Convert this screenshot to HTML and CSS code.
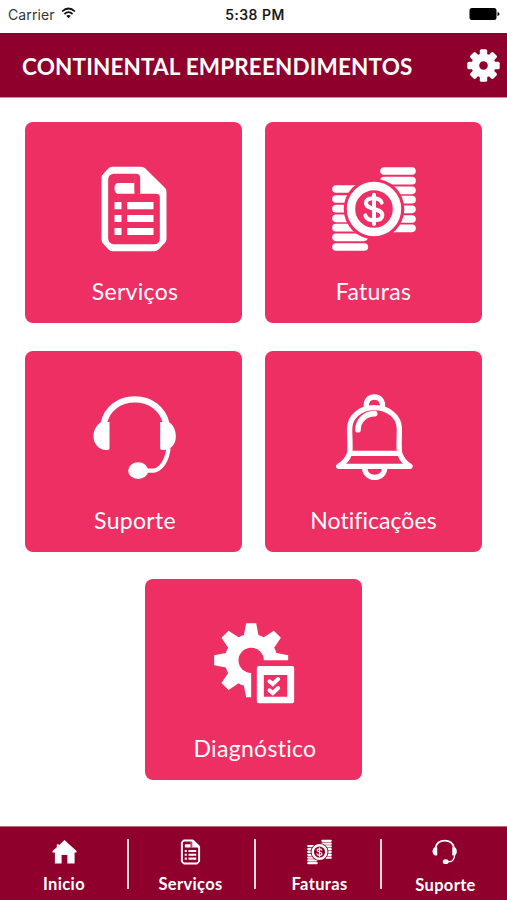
FILE: index.html
```html
<!DOCTYPE html>
<html lang="pt">
<head>
<meta charset="utf-8">
<title>Continental Empreendimentos</title>
<link rel="stylesheet" href="styles.css">
</head>
<body>
<svg class="defs" aria-hidden="true">
  <symbol id="doc" viewBox="34.5 45 252 264">
    <path fill-rule="evenodd" d="M94 50H182Q189 50 194 55L253 113Q258 118 258 125V267Q258 274 253 279L235 298Q229 304 221 304H98Q90 304 85 299L68 281Q63 276 63 268V84Q63 77 68 72L84 55Q88 50 94 50ZM99 71Q83 73 83 89V265Q84 282 100 283H222Q237 282 238 266V142Q238 131 226 131H176Q163 130 163 118V71Z"/>
    <path d="M110 99H162V131H110Q102 128 102 115T110 99ZM102 156h21v22h-21zM140 156h79v22h-79zM102 195h21v21h-21zM140 195h79v21h-79zM102 234h21v21h-21zM140 234h79v21h-79z"/>
    <path class="fold" d="M162 71H168Q179 72 179 83V131H170Q162 128 162 118Z"/>
  </symbol>
  <symbol id="coins" viewBox="36 30 252 264">
    <mask id="coin-cut" maskUnits="userSpaceOnUse" x="30" y="30" width="270" height="270">
      <rect x="30" y="30" width="270" height="270" fill="#fff"/>
      <circle cx="162" cy="162" r="91" fill="#000"/>
    </mask>
    <g mask="url(#coin-cut)">
      <path d="M192 48H276M192 77H276M192 106H276M192 134H276M192 163H276M192 192H276M192 220H276M48 102H132M48 132H132M48 161H132M48 190H132M48 218H132M48 247H132M48 276H133" fill="none" stroke="currentColor" stroke-width="23" stroke-linecap="round"/>
    </g>
    <circle cx="162" cy="162" r="69" fill="none" stroke="currentColor" stroke-width="25"/>
    <path d="M185 143C181 131 171 130 160 130C145 130 138 136 138 144C138 155 149 158 162 162C177 166 187 170 187 181C187 192 176 196 162 196C148 196 139 191 136 181M162 119V207" fill="none" stroke="currentColor" stroke-width="12" stroke-linecap="round"/>
  </symbol>
  <symbol id="headset" viewBox="34.5 27 252 264">
    <path d="M70 114C79 72 115 43 163 43S247 72 257 114" fill="none" stroke="currentColor" stroke-width="19"/>
    <path d="M87 111V190Q87 195 82 195H74C53 193 39 176 39 154C39 133 51 116 63 111ZM239 111V190Q239 195 244 195H253C274 193 286 176 286 154C286 133 276 116 264 111Z"/>
    <path d="M264 190C260 226 242 254 219 257H195" fill="none" stroke="currentColor" stroke-width="13"/>
    <ellipse cx="173" cy="257" rx="30" ry="25"/>
  </symbol>
  <symbol id="bell" viewBox="96 27 252 264">
    <g fill="none" stroke="currentColor" stroke-width="16" stroke-linejoin="round" stroke-linecap="round">
      <path d="M200 68C196 48 206 36 223 36S250 48 247 68"/>
      <path d="M149 205C152 176 148 153 149 129C150 94 182 68 223 68S297 94 298 129C299 153 295 176 299 205C305 222 316 235 330 244H116C131 235 143 222 149 205H299"/>
      <path d="M194 249C195 267 208 277 224 277S253 267 254 249"/>
      <path d="M174 134C174 107 194 87 224 86" stroke-width="17"/>
    </g>
  </symbol>
  <symbol id="diagnostic" viewBox="79.5 36 252 264">
    <mask id="gear-cut" maskUnits="userSpaceOnUse" x="70" y="30" width="270" height="270">
      <rect x="70" y="30" width="270" height="270" fill="#fff"/>
      <circle cx="197" cy="151" r="38" fill="#000"/>
      <path d="M197 151H340V300H197Z" fill="#000"/>
    </mask>
    <g mask="url(#gear-cut)">
      <circle cx="197" cy="151" r="79"/>
      <path id="tooth-pair" d="M182 40H212L221 86H173ZM182 262H212L221 216H173Z"/>
      <use href="#tooth-pair" transform="rotate(45 197 151)"/>
      <use href="#tooth-pair" transform="rotate(90 197 151)"/>
      <use href="#tooth-pair" transform="rotate(135 197 151)"/>
    </g>
    <path fill-rule="evenodd" d="M220 168H320Q326 168 326 174V274Q326 280 320 280H220Q214 280 214 274V174Q214 168 220 168ZM235 195V260H305V195Z"/>
    <path d="M252 214L262 222L278 207M252 241L262 249L278 234" fill="none" stroke="currentColor" stroke-width="12" stroke-linecap="round"/>
  </symbol>
</svg>

<div class="status">
  <div class="carrier"><span>Carrier</span>
    <svg class="wifi" viewBox="0 0 15 12"><path d="M1 4.5Q7.5-1.5 14 4.5M3.4 7Q7.5 3.3 11.6 7" fill="none" stroke="#111" stroke-width="1.7"/><path d="M5.2 8.8Q7.5 7 9.8 8.8L7.5 11.2Z" fill="#111"/></svg>
  </div>
  <div class="clock">5:38 PM</div>
  <svg class="battery" viewBox="0 0 31 12"><rect x=".5" width="27" height="12" rx="2.5"/><path d="M28.5 4Q30.5 4.5 30.5 6T28.5 8Z"/></svg>
</div>

<header class="header">
  <h1 class="title">CONTINENTAL EMPREENDIMENTOS</h1>
  <svg class="settings" viewBox="-16.5 -16.5 33 33">
    <mask id="hub" maskUnits="userSpaceOnUse" x="-17" y="-17" width="34" height="34"><rect x="-17" y="-17" width="34" height="34" fill="#fff"/><circle r="4.3" fill="#000"/></mask>
    <g mask="url(#hub)"><circle r="12"/>
      <rect id="cog" x="-3.7" y="-16.2" width="7.4" height="32.4" rx="1.5"/>
      <use href="#cog" transform="rotate(45)"/><use href="#cog" transform="rotate(90)"/><use href="#cog" transform="rotate(135)"/>
    </g>
  </svg>
</header>

<main class="menu">
  <a class="card"><svg class="icon"><use href="#doc"/></svg><span class="label">Serviços</span></a>
  <a class="card"><svg class="icon"><use href="#coins"/></svg><span class="label label-bills">Faturas</span></a>
  <a class="card"><svg class="icon"><use href="#headset"/></svg><span class="label">Suporte</span></a>
  <a class="card"><svg class="icon"><use href="#bell"/></svg><span class="label label-long">Notificações</span></a>
  <a class="card card-last"><svg class="icon"><use href="#diagnostic"/></svg><span class="label">Diagnóstico</span></a>
</main>

<nav class="tabs">
  <a class="tab"><svg class="tab-icon" viewBox="0 0 26 26"><path d="M13 .5L25.5 12V13.5H23.500V25H16V16H10V25H3V13.500H.5V12L5 8V5H7V6.200Z"/></svg><span>Inicio</span></a>
  <a class="tab"><svg class="tab-icon"><use href="#doc"/></svg><span>Serviços</span></a>
  <a class="tab tab-bills"><svg class="tab-icon"><use href="#coins"/></svg><span>Faturas</span></a>
  <a class="tab tab-support"><svg class="tab-icon"><use href="#headset"/></svg><span>Suporte</span></a>
</nav>
</body>
</html>
```

FILE: styles.css
```css
* { box-sizing: border-box; }

body {
  margin: 0;
  width: 507px;
  height: 900px;
  display: flex;
  flex-direction: column;
  background: #fff;
  color: #fff;
  font-family: Lato, "Open Sans", sans-serif;
  overflow: hidden;
}

svg { fill: currentColor; display: block; flex: none; }
.defs { position: absolute; width: 0; height: 0; }

.status {
  height: 33px;
  flex: none;
  display: grid;
  grid-template-columns: 1fr auto 1fr;
  align-items: center;
  padding: 0 7px 5px 8px;
  color: #111;
  font-family: Inter, sans-serif;
  font-size: 14px;
}
.carrier { display: flex; align-items: center; gap: 6px; color: #333; letter-spacing: .1px; }
.wifi { width: 15px; height: 12px; margin-top: -2px; }
.clock { font-weight: 500; letter-spacing: .5px; -webkit-text-stroke: .2px #111; margin-left: 2px; }
.battery { width: 31px; height: 12px; justify-self: end; color: #000; }

.header {
  height: 65px;
  flex: none;
  display: flex;
  align-items: center;
  justify-content: space-between;
  padding: 0 7px 0 22px;
  background: #8f002d;
  border-bottom: 1px solid #c5909f;
}
.title {
  margin: 3px 0 0;
  font-size: 22.5px;
  line-height: 28px;
  font-weight: 700;
  letter-spacing: .15px;
  white-space: nowrap;
}
.settings { width: 33px; height: 33px; }

.menu {
  flex: 1;
  display: grid;
  grid-template-columns: 217px 217px;
  grid-template-rows: 201px 201px 201px;
  column-gap: 23px;
  row-gap: 28px;
  justify-content: center;
  padding-top: 24px;
}
.card {
  display: flex;
  flex-direction: column;
  align-items: center;
  padding-top: 43px;
  border-radius: 8px;
  background: #ee2f63;
}
.card-last { grid-column: 1 / 3; justify-self: center; width: 217px; margin: -1px 0 1px; }
.icon { width: 84px; height: 88px; }
.fold { fill: #ee2f63; }
.label {
  margin: 23px 0 0 3px;
  font-size: 23px;
  line-height: 30px;
  white-space: nowrap;
  letter-spacing: .3px;
}
.label-bills { margin-left: 0; }
.label-long { letter-spacing: .05px; margin-left: 0; }

.tabs {
  height: 74px;
  flex: none;
  display: grid;
  grid-template-columns: 128px 127px 126px 126px;
  background: #8f002d;
  border-top: 1px solid #b5657f;
}
.tabs .fold { fill: #8f002d; }
.tab {
  position: relative;
  display: flex;
  flex-direction: column;
  align-items: center;
  padding-top: 12px;
  font-size: 16.5px;
  font-weight: 700;
  letter-spacing: .35px;
}
.tab + .tab { padding-right: 2px; }
.tab + .tab::before {
  content: "";
  position: absolute;
  left: -1px;
  top: 12px;
  width: 2px;
  height: 50px;
  background: #f5d9e1;
}
.tab-icon { width: 25px; height: 26px; }
.tab span { margin-top: 9px; line-height: 20px; }
.tab + .tab-bills { padding: 12px 0 0 3px; }
.tab + .tab-support { padding: 12px 0 0 3px; }
.tab-support .tab-icon { margin-left: -2px; }
.tab-support span { margin-top: 10px; }
```
